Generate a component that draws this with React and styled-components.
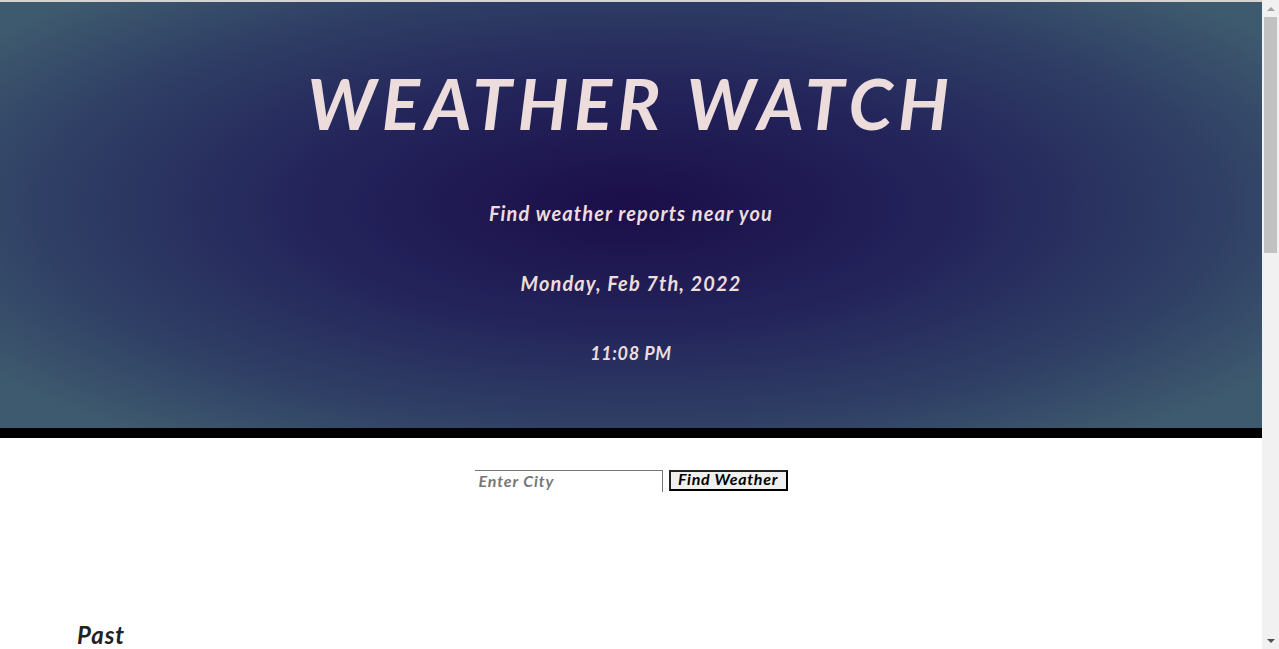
import React, { useState } from 'react'
import styled, { createGlobalStyle } from 'styled-components'

const GlobalStyle = createGlobalStyle`
  html, body {
    margin: 0;
    padding: 0;
  }
  body {
    font-family: 'Lato', 'Noto Sans', sans-serif;
    background: #ffffff;
  }
`

const Page = styled.div`
  min-height: 1690px;
  margin-right: 17px;
  border-top: 2px solid #d4d4d4;
  box-sizing: border-box;
`

// stand-in for the classic browser scrollbar seen on the right edge
const ScrollBar = styled.div`
  position: fixed;
  top: 0;
  right: 0;
  bottom: 0;
  width: 17px;
  display: flex;
  flex-direction: column;
  background: #f1f1f1;
`

const ScrollArrow = styled.div`
  height: 17px;
  flex: none;
  display: flex;
  align-items: center;
  justify-content: center;
  &::before {
    content: '';
    border-left: 4px solid transparent;
    border-right: 4px solid transparent;
    ${(p) =>
      p.down
        ? 'border-top: 4px solid #505050;'
        : 'border-bottom: 4px solid #a3a3a3;'}
  }
`

const ScrollTrack = styled.div`
  flex: 1;
  padding: 0 2px;
`

const ScrollThumb = styled.div`
  height: 236px;
  background: #c1c1c1;
`

const Hero = styled.header`
  display: flex;
  flex-direction: column;
  align-items: center;
  padding: 61px 0 60px;
  background: radial-gradient(
    ellipse 62% 68% at 50% 48%,
    #1b0e49 0%,
    #23235a 40%,
    #2f3f65 75%,
    #3e5a6e 100%
  );
  border-bottom: 10px solid #000;
  color: #ecdcdc;
`

const Title = styled.h1`
  margin: 0 0 55px;
  height: 80px;
  line-height: 80px;
  font-size: 71px;
  font-weight: 700;
  font-style: italic;
  letter-spacing: 5.6px;
`

const Line = styled.p`
  margin: 0;
  height: 30px;
  line-height: 30px;
  font-size: ${(p) => p.size || 20}px;
  font-weight: 700;
  font-style: italic;
  letter-spacing: ${(p) => p.spacing ?? 1.1}px;
  & + & {
    margin-top: 40px;
  }
`

const SearchRow = styled.form`
  display: flex;
  justify-content: center;
  align-items: flex-start;
  gap: 6px;
  margin-top: 32px;
`

const CityInput = styled.input`
  width: 188px;
  height: 22px;
  box-sizing: border-box;
  padding: 0 4px 3px;
  border: none;
  border-top: 1px solid #767676;
  border-right: 1px solid #767676;
  font-family: 'Lato', sans-serif;
  font-size: 16px;
  font-weight: 700;
  font-style: italic;
  letter-spacing: 0.9px;
  color: #222;
  outline: none;
  &::placeholder {
    color: #777;
  }
`

const FindButton = styled.button`
  width: 119px;
  height: 21px;
  box-sizing: border-box;
  padding: 0 0 3px;
  border: 2px solid #000;
  border-color: #222 #000 #000 #222;
  background: #efefef;
  font-family: 'Lato', sans-serif;
  font-size: 16px;
  line-height: 14px;
  font-weight: 700;
  font-style: italic;
  color: #000;
  letter-spacing: 0.7px;
  cursor: pointer;
`

const History = styled.section`
  padding: 0 77px;
  margin-top: 128px;
`

const HistoryTitle = styled.h2`
  margin: 0;
  font-size: 24px;
  font-weight: 700;
  font-style: italic;
  letter-spacing: 1px;
  color: #222;
  line-height: 30px;
`

export default function App() {
  const [city, setCity] = useState('')

  return (
    <>
      <GlobalStyle />
      <Page>
        <Hero>
          <Title>WEATHER WATCH</Title>
          <Line>Find weather reports near you</Line>
          <Line>Monday, Feb 7th, 2022</Line>
          <Line size={18} spacing={0.6}>11:08 PM</Line>
        </Hero>
        <SearchRow onSubmit={(e) => e.preventDefault()}>
          <CityInput
            placeholder='Enter City'
            value={city}
            onChange={(e) => setCity(e.target.value)}
          />
          <FindButton type='submit'>Find Weather</FindButton>
        </SearchRow>
        <History>
          <HistoryTitle>Past</HistoryTitle>
        </History>
      </Page>
      <ScrollBar>
        <ScrollArrow />
        <ScrollTrack>
          <ScrollThumb />
        </ScrollTrack>
        <ScrollArrow down />
      </ScrollBar>
    </>
  )
}
